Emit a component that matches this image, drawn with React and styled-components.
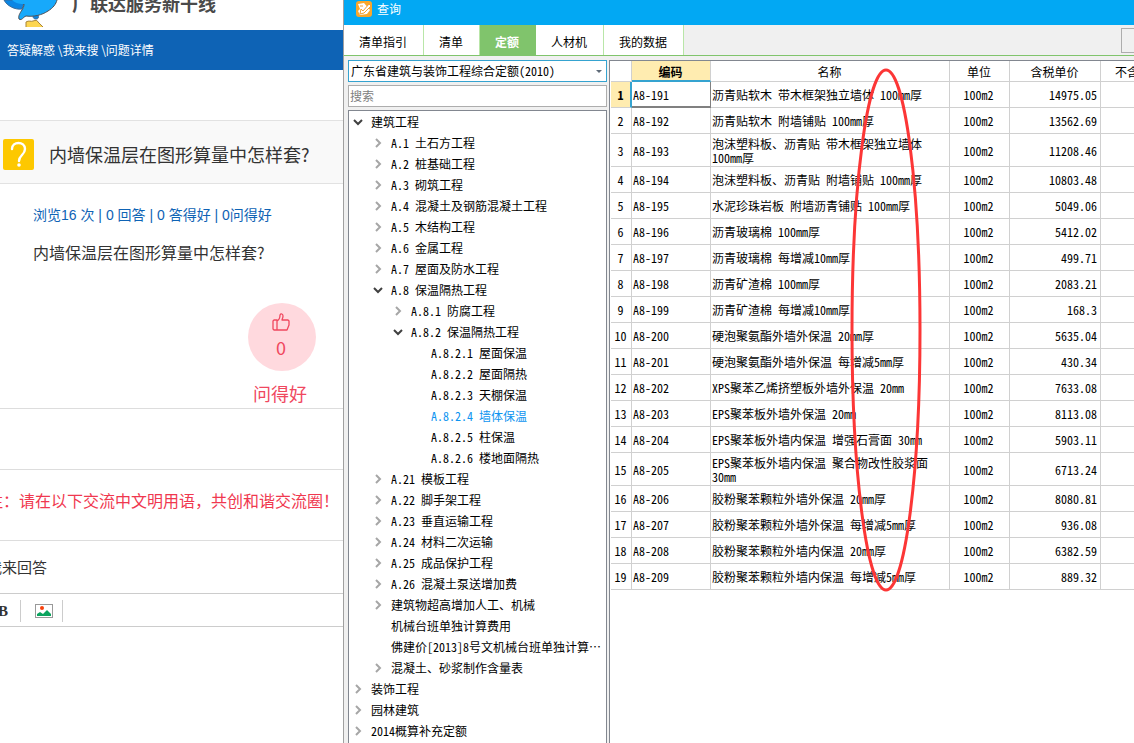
import React, { useState } from "react";
import styled, { createGlobalStyle, css } from "styled-components";

const TABS = ["清单指引", "清单", "定额", "人材机", "我的数据"];

const TREE = [
  { level: 0, text: "建筑工程", state: "open" },
  { level: 1, text: "A.1 土石方工程", state: "closed" },
  { level: 1, text: "A.2 桩基础工程", state: "closed" },
  { level: 1, text: "A.3 砌筑工程", state: "closed" },
  { level: 1, text: "A.4 混凝土及钢筋混凝土工程", state: "closed" },
  { level: 1, text: "A.5 木结构工程", state: "closed" },
  { level: 1, text: "A.6 金属工程", state: "closed" },
  { level: 1, text: "A.7 屋面及防水工程", state: "closed" },
  { level: 1, text: "A.8 保温隔热工程", state: "open" },
  { level: 2, text: "A.8.1 防腐工程", state: "closed" },
  { level: 2, text: "A.8.2 保温隔热工程", state: "open" },
  { level: 3, text: "A.8.2.1 屋面保温" },
  { level: 3, text: "A.8.2.2 屋面隔热" },
  { level: 3, text: "A.8.2.3 天棚保温" },
  { level: 3, text: "A.8.2.4 墙体保温" },
  { level: 3, text: "A.8.2.5 柱保温" },
  { level: 3, text: "A.8.2.6 楼地面隔热" },
  { level: 1, text: "A.21 模板工程", state: "closed" },
  { level: 1, text: "A.22 脚手架工程", state: "closed" },
  { level: 1, text: "A.23 垂直运输工程", state: "closed" },
  { level: 1, text: "A.24 材料二次运输", state: "closed" },
  { level: 1, text: "A.25 成品保护工程", state: "closed" },
  { level: 1, text: "A.26 混凝土泵送增加费", state: "closed" },
  { level: 1, text: "建筑物超高增加人工、机械", state: "closed" },
  { level: 1, text: "机械台班单独计算费用" },
  { level: 1, text: "佛建价[2013]8号文机械台班单独计算…" },
  { level: 1, text: "混凝土、砂浆制作含量表", state: "closed" },
  { level: 0, text: "装饰工程", state: "closed" },
  { level: 0, text: "园林建筑", state: "closed" },
  { level: 0, text: "2014概算补充定额", state: "closed" },
];

const QUOTAS = [
  ["A8-191", "沥青贴软木 带木框架独立墙体 100mm厚", "14975.05"],
  ["A8-192", "沥青贴软木 附墙铺贴 100mm厚", "13562.69"],
  ["A8-193", "泡沫塑料板、沥青贴 带木框架独立墙体 100mm厚", "11208.46"],
  ["A8-194", "泡沫塑料板、沥青贴 附墙铺贴 100mm厚", "10803.48"],
  ["A8-195", "水泥珍珠岩板 附墙沥青铺贴 100mm厚", "5049.06"],
  ["A8-196", "沥青玻璃棉 100mm厚", "5412.02"],
  ["A8-197", "沥青玻璃棉 每增减10mm厚", "499.71"],
  ["A8-198", "沥青矿渣棉 100mm厚", "2083.21"],
  ["A8-199", "沥青矿渣棉 每增减10mm厚", "168.3"],
  ["A8-200", "硬泡聚氨酯外墙外保温 20mm厚", "5635.04"],
  ["A8-201", "硬泡聚氨酯外墙外保温 每增减5mm厚", "430.34"],
  ["A8-202", "XPS聚苯乙烯挤塑板外墙外保温 20mm", "7633.08"],
  ["A8-203", "EPS聚苯板外墙外保温 20mm", "8113.08"],
  ["A8-204", "EPS聚苯板外墙内保温 增强石膏面 30mm", "5903.11"],
  ["A8-205", "EPS聚苯板外墙内保温 聚合物改性胶浆面 30mm", "6713.24"],
  ["A8-206", "胶粉聚苯颗粒外墙外保温 20mm厚", "8080.81"],
  ["A8-207", "胶粉聚苯颗粒外墙外保温 每增减5mm厚", "936.08"],
  ["A8-208", "胶粉聚苯颗粒外墙内保温 20mm厚", "6382.59"],
  ["A8-209", "胶粉聚苯颗粒外墙内保温 每增减5mm厚", "889.32"],
];

function MascotIcon() {
  return (
    <Mascot viewBox="0 0 60 28" aria-hidden="true">
      <path
        d="M4 0c3 6 11 10 18 9L25 0Z"
        fill="#0b86e4"
        stroke="#3b6d9c"
      />
      <path
        d="M33 15c0 2 0 4 3 4 2 0 3-1 2-4Z"
        fill="#0b86e4"
        stroke="#3b6d9c"
      />
      <path
        d="M12 0c4 4 9 4 12 4 0 3-1 4-2 6-2 3-4 6-3 9 3 2 4-2 7-3 8 1 16-1 22-5 5-3 8-7 9-11Z"
        fill="#17a9fb"
      />
      <path
        d="M24 4c0 3-1 4-2 6-2 3-4 6-3 9 3 2 4-2 7-3 8 1 16-1 22-5 5-3 8-7 9-11"
        fill="none"
        stroke="#4b5058"
      />
      <path
        d="M26 27v-5c3-2 5 0 7-1 3-1 4-1 5 1l5 5Z"
        fill="#fdd651"
      />
      <path
        d="M26 27v-5c3-2 5 0 7-1 3-1 4-1 5 1l5 5"
        fill="none"
        stroke="#a8853c"
      />
    </Mascot>
  );
}

function Chevron({ open }) {
  return (
    <ChevronSvg viewBox="0 0 10 10" $open={open} aria-hidden="true">
      {open ? <path d="M1 3l4 4 4-4" /> : <path d="M3 1l4 4-4 4" />}
    </ChevronSvg>
  );
}

function ForumPage() {
  return (
    <Forum>
      <ForumContent>
        <Brand>
          <MascotIcon />
          <BrandName>广联达服务新干线</BrandName>
        </Brand>
        <Breadcrumb>
          <a href="#qa">答疑解惑</a> \<a href="#search">我来搜</a> \
          <a href="#detail">问题详情</a>
        </Breadcrumb>
        <QuestionBar>
          <QuestionIcon viewBox="0 0 31 31" aria-hidden="true">
            <rect width="31" height="31" rx="2" fill="#fdc800" />
            <path
              d="M9 10c0-8 13-8 13 0 0 6-6 6-6 12"
              fill="none"
              stroke="#fff"
              strokeWidth="2.4"
              strokeLinecap="round"
            />
            <circle cx="16" cy="26" r="1.8" fill="#fff" />
          </QuestionIcon>
          <QuestionTitle>内墙保温层在图形算量中怎样套?</QuestionTitle>
        </QuestionBar>
        <QuestionBody>
          <Stats>浏览16 次 | 0 回答 | 0 答得好 | 0问得好</Stats>
          <Detail>内墙保温层在图形算量中怎样套?</Detail>
          <Vote>
            <VoteButton type="button" aria-label="问得好">
              <svg width="18" height="18" viewBox="0 0 18 18" aria-hidden="true">
                <path
                  d="M1 8l1-1h3v10H2l-1-1ZM5 8c2-1 3-3 3-6 1-2 3-1 3 1 0 2-1 3-1 4h6l1 1v4l-2 5H5"
                  fill="none"
                  stroke="#f0485f"
                  strokeWidth="1.3"
                  strokeLinejoin="round"
                />
              </svg>
              <span>0</span>
            </VoteButton>
            <span>问得好</span>
          </Vote>
        </QuestionBody>
        <Notice>注：请在以下交流中文明用语，共创和谐交流圈！</Notice>
        <AnswerHeading>我来回答</AnswerHeading>
        <EditorBar>
          <EditorButton type="button" aria-label="加粗">
            B
          </EditorButton>
          <EditorButton type="button" aria-label="插入图片">
            <svg width="18" height="14" viewBox="0 0 18 14" aria-hidden="true">
              <rect x=".5" y=".5" width="17" height="13" fill="#fff" stroke="#999" />
              <circle cx="7" cy="4" r="2" fill="#f8400c" />
              <path d="M2 12V10l3-2 3 2 4-4 4 4v2Z" fill="#0ba45e" />
            </svg>
          </EditorButton>
        </EditorBar>
      </ForumContent>
    </Forum>
  );
}

function QuotaTable() {
  return (
    <GridPane>
      <Grid>
        <colgroup>
          <Col $w={21} />
          <Col $w={79} />
          <Col $w={239} />
          <Col $w={60} />
          <Col $w={91} />
          <Col $w={90} />
        </colgroup>
        <thead>
          <tr>
            <HeadCell />
            <HeadCell $active>编码</HeadCell>
            <HeadCell>名称</HeadCell>
            <HeadCell>单位</HeadCell>
            <HeadCell>含税单价</HeadCell>
            <HeadCell>不含税单价</HeadCell>
          </tr>
        </thead>
        <tbody>
          {QUOTAS.map(([code, name, price], i) => (
            <GridRow key={code} $tall={name.length > 24}>
              <RowNumber $active={i === 0}>{i + 1}</RowNumber>
              <Cell $selected={i === 0}>{code}</Cell>
              <Cell>{name}</Cell>
              <Cell $align="center">100m2</Cell>
              <Cell $align="right">{price}</Cell>
              <Cell />
            </GridRow>
          ))}
        </tbody>
      </Grid>
      <Marker viewBox="0 0 74 526" aria-hidden="true">
        <ellipse cx="37" cy="263" rx="34" ry="260" />
      </Marker>
    </GridPane>
  );
}

function QueryWindow() {
  const [tab, setTab] = useState("定额");
  const [node, setNode] = useState("A.8.2.4 墙体保温");

  return (
    <Window>
      <TitleBar>
        <svg width="16" height="16" viewBox="0 0 16 16" aria-hidden="true">
          <rect width="16" height="16" rx="3" fill="#f9a72b" />
          <path d="M2 3l6-1 6 7-3 4-7 1-2-4 2-2Z" fill="#fff" />
          <path d="M5 8l2 2 6-7 2 2-7 7-4 1Z" fill="#fff" stroke="#f5a030" />
          <path d="M4 5h3" fill="none" stroke="#f5a030" />
        </svg>
        <span>查询</span>
      </TitleBar>
      <TabBar>
        {TABS.map((name) => (
          <Tab
            key={name}
            type="button"
            $active={name === tab}
            onClick={() => setTab(name)}
          >
            {name}
          </Tab>
        ))}
        <CornerButton type="button" aria-label="更多" />
      </TabBar>
      <Panes>
        <TreePane>
          <SelectWrap>
            <Library aria-label="定额库">
              <option>广东省建筑与装饰工程综合定额(2010)</option>
            </Library>
            <SelectArrow viewBox="0 0 6 4" aria-hidden="true">
              <path d="M0 0h6L3 3Z" fill="#5f6b78" />
            </SelectArrow>
          </SelectWrap>
          <Search type="text" placeholder="搜索" aria-label="搜索" />
          <Tree>
            {TREE.map((item) => (
              <TreeRow key={item.text} $level={item.level}>
                <ChevronSlot>
                  {item.state && <Chevron open={item.state === "open"} />}
                </ChevronSlot>
                <TreeButton
                  type="button"
                  $active={item.text === node}
                  onClick={() => setNode(item.text)}
                >
                  {item.text}
                </TreeButton>
              </TreeRow>
            ))}
          </Tree>
        </TreePane>
        <QuotaTable />
      </Panes>
    </Window>
  );
}

function App() {
  return (
    <>
      <GlobalStyle />
      <Screen>
        <ForumPage />
        <QueryWindow />
      </Screen>
    </>
  );
}

export default App;

const GlobalStyle = createGlobalStyle`
  * {
    box-sizing: border-box;
  }

  body {
    margin: 0;
    background-color: #fff;
    font-family: "Noto Sans CJK SC", sans-serif;
  }

  button,
  input,
  select {
    font: inherit;
    font-feature-settings: inherit;
    color: inherit;
  }
`;

const Screen = styled.div`
  display: flex;
  height: 100vh;
  overflow: hidden;
`;

const Forum = styled.main`
  flex: 0 0 344px;
  overflow: hidden;
  border-right: 1px solid #a0a0a0;
  color: #333;
`;

/* the page is scrolled slightly sideways */
const ForumContent = styled.div`
  margin-left: -13px;
`;

const Brand = styled.header`
  display: flex;
  height: 30px;
  padding-left: 13px;
`;

const Mascot = styled.svg`
  width: 60px;
  height: 28px;
  margin-right: 12px;
`;

const BrandName = styled.div`
  margin-top: -9px;
  font-size: 18px;
  font-weight: 700;
  line-height: 24px;
  color: #4a4a4a;
`;

const Breadcrumb = styled.nav`
  height: 40px;
  padding-left: 20px;
  background-color: #0e63b5;
  color: #fff;
  font-size: 12px;
  line-height: 40px;

  a {
    color: inherit;
    text-decoration: none;
  }
`;

const QuestionBar = styled.div`
  display: flex;
  align-items: center;
  gap: 15px;
  height: 64px;
  margin-top: 50px;
  padding: 4px 0 0 16px;
  border-top: 1px solid #e2e2e2;
  border-bottom: 1px solid #e2e2e2;
  background-color: #f9f9f9;
`;

const QuestionIcon = styled.svg`
  width: 31px;
  height: 31px;
`;

const QuestionTitle = styled.h1`
  margin: 0;
  font-size: 18px;
  font-weight: 400;
  line-height: 24px;
`;

const QuestionBody = styled.section`
  height: 225px;
  padding: 20px 27px 0 46px;
  border-bottom: 1px solid #ddd;
`;

const Stats = styled.p`
  margin: 0;
  color: #0e63b5;
  font-family: "Liberation Sans", "Noto Sans CJK SC", sans-serif;
  font-size: 14px;
  line-height: 22px;
`;

const Detail = styled.p`
  margin: 14px 0 0;
  font-size: 16px;
  line-height: 24px;
`;

const Vote = styled.div`
  display: flex;
  flex-direction: column;
  align-items: flex-end;
  gap: 10px;
  margin-top: 39px;
  color: #f0485f;
  font-size: 18px;
  line-height: 24px;

  > span {
    margin-right: 9px;
  }
`;

const VoteButton = styled.button`
  display: flex;
  flex-direction: column;
  align-items: center;
  gap: 4px;
  width: 68px;
  height: 68px;
  padding: 10px 2px 0 0;
  border: 0;
  border-radius: 50%;
  background-color: #ffd9de;
`;

const Notice = styled.p`
  height: 72px;
  margin: 60px 0 0;
  border-top: 1px solid #ddd;
  border-bottom: 1px solid #ddd;
  color: #f0384f;
  font-size: 16px;
  line-height: 60px;
  white-space: nowrap;
`;

const AnswerHeading = styled.h2`
  margin: 0;
  font-size: 15px;
  font-weight: 400;
  line-height: 52px;
`;

const EditorBar = styled.div`
  display: flex;
  align-items: center;
  height: 34px;
  padding: 2px 0 0 5px;
  border-top: 1px solid #ccc;
  border-bottom: 1px solid #ccc;
`;

const EditorButton = styled.button`
  display: flex;
  align-items: center;
  height: 22px;
  padding: 0 9px 0 14px;
  border: 0;
  border-right: 1px solid #ccc;
  background: none;
  font-family: "Liberation Serif", serif;
  font-size: 15px;
  font-weight: 700;

  &:first-child {
    padding: 0 12px 0 6px;
  }
`;

const Window = styled.section`
  flex: 1;
  display: flex;
  flex-direction: column;
  min-width: 0;
  background-color: #f0f0f0;
  color: #000;
  font-size: 12px;
  font-feature-settings: "hwid";
`;

const TitleBar = styled.header`
  display: flex;
  gap: 5px;
  height: 25px;
  padding: 1px 0 0 12px;
  background-color: #02a8f3;
  color: #fff;
  line-height: 16px;
`;

const TabBar = styled.div`
  display: flex;
  height: 31px;
  border-bottom: 1px solid #80c46c;
`;

const Tab = styled.button`
  padding: 2px 16px 0 15px;
  border: 0;
  border-right: 1px solid #b9e6a8;
  background-color: #fff;

  ${({ $active }) =>
    $active &&
    css`
      background-color: #80c46c;
      border-color: #80c46c;
      color: #fff;
      font-weight: 700;
    `}
`;

const CornerButton = styled.button`
  width: 13px;
  height: 25px;
  margin: 3px 0 0 auto;
  border: 1px solid #adadad;
  border-right: 0;
  background-color: #f0f0f0;
`;

const Panes = styled.div`
  flex: 1;
  display: flex;
  gap: 2px;
  min-height: 0;
  padding: 4px 0 0 4px;
`;

const TreePane = styled.div`
  flex: 0 0 259px;
  display: flex;
  flex-direction: column;
  gap: 3px;
`;

const SelectWrap = styled.div`
  position: relative;
  display: flex;
`;

const Library = styled.select`
  width: 100%;
  height: 22px;
  padding: 0 2px 2px;
  border: 1px solid #35a3d0;
  border-radius: 0;
  background-color: #fff;
  appearance: none;
`;

const SelectArrow = styled.svg`
  position: absolute;
  top: 10px;
  right: 5px;
  width: 6px;
  height: 4px;
  pointer-events: none;
`;

const Search = styled.input`
  height: 22px;
  padding: 0 1px 2px;
  border: 1px solid #adadad;
  background-color: #fff;

  &::placeholder {
    color: #808080;
  }
`;

const Tree = styled.ul`
  flex: 1;
  min-height: 0;
  margin: 0;
  padding: 0;
  overflow: hidden;
  list-style: none;
  border: 1px solid #828790;
  border-bottom: 0;
  background-color: #fff;
`;

const TreeRow = styled.li`
  display: flex;
  align-items: center;
  height: 21px;
  padding-left: ${({ $level }) => 4 + $level * 20}px;
`;

const ChevronSlot = styled.span`
  display: flex;
  flex: 0 0 18px;
`;

const ChevronSvg = styled.svg`
  width: 10px;
  height: 10px;
  fill: none;
  stroke: ${({ $open }) => ($open ? "#404040" : "#a6a6a6")};
  stroke-width: 2;
`;

const TreeButton = styled.button`
  padding: 0;
  border: 0;
  background: none;
  color: ${({ $active }) => ($active ? "#0d94f0" : "#000")};
  line-height: 20px;
  white-space: nowrap;
`;

const GridPane = styled.div`
  position: relative;
  flex: 1;
  min-width: 0;
  overflow: hidden;
  border-top: 1px solid #828790;
  border-left: 1px solid #828790;
  background-color: #fff;
`;

const Grid = styled.table`
  width: 580px;
  table-layout: fixed;
  border-collapse: separate;
  border-spacing: 0;
  margin-left: 1px;
  line-height: 14px;
`;

const Col = styled.col`
  width: ${({ $w }) => $w}px;
`;

const HeadCell = styled.th`
  height: 21px;
  padding: 2px 1px 0 0;
  border-right: 1px solid #d0d0d0;
  border-bottom: 1px solid #d0d0d0;
  font-weight: 400;

  ${({ $active }) =>
    $active &&
    css`
      padding-top: 3px;
      border-bottom: 2px solid #35a3d0;
      background-color: #ffecb0;
      font-weight: 700;
    `}
`;

const RowNumber = styled.th`
  padding: 0 1px 0 0;
  border-right: 1px solid #d0d0d0;
  border-bottom: 1px solid #d0d0d0;
  font-weight: 400;

  ${({ $active }) =>
    $active &&
    css`
      padding: 0;
      border-right: 2px solid #35a3d0;
      background-color: #ffecb0;
      font-weight: 700;
    `}
`;

const Cell = styled.td`
  padding: 0 3px 0 1px;
  border-right: 1px solid #d0d0d0;
  border-bottom: 1px solid #d0d0d0;
  text-align: ${({ $align }) => $align || "left"};

  ${({ $selected }) =>
    $selected &&
    css`
      padding-top: 1px;
      border-right-color: #808080;
      border-bottom: 2px solid #808080;
    `}
`;

const GridRow = styled.tr`
  height: ${({ $tall }) => ($tall ? 33 : 26)}px;

  ${({ $tall }) =>
    $tall &&
    css`
      ${Cell}, ${RowNumber} {
        padding-top: 2px;
      }
    `}
`;

const Marker = styled.svg`
  position: absolute;
  top: 6px;
  left: 239px;
  width: 74px;
  height: 526px;
  pointer-events: none;

  ellipse {
    fill: none;
    stroke: #fc3636;
    stroke-width: 3;
  }
`;
